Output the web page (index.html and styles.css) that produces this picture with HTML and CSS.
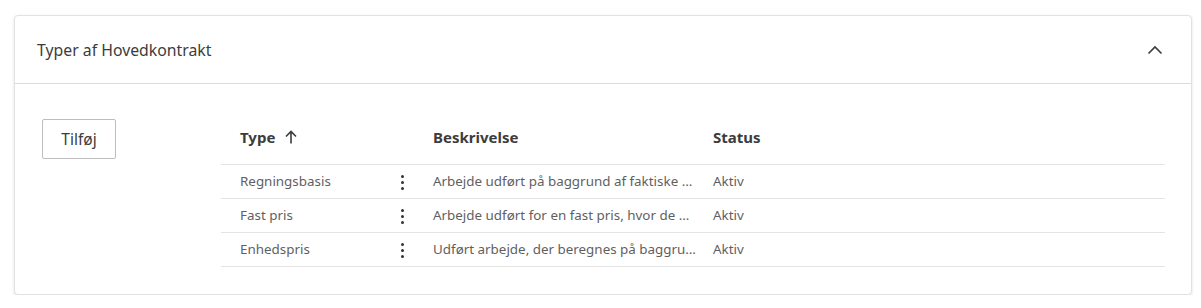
FILE: index.html
```html
<!DOCTYPE html>
<html lang="da">
<head>
  <meta charset="UTF-8">
  <meta name="viewport" content="width=device-width, initial-scale=1.0">
  <title>Typer af Hovedkontrakt</title>
  <link rel="stylesheet" href="styles.css">
</head>
<body>
  <div class="panel">
    <!-- Panel header -->
    <div class="panel-header">
      <span class="panel-title">Typer af Hovedkontrakt</span>
      <svg class="chevron" width="16" height="10" viewBox="0 0 16 10">
        <path d="M1.5 8.5 L8 2 L14.5 8.5" fill="none" stroke="#3c3c3c" stroke-width="1.6"/>
      </svg>
    </div>

    <!-- Panel body -->
    <div class="panel-body">
      <button class="btn">Tilføj</button>

      <table class="table">
        <thead>
          <tr>
            <th class="col-type">
              <span class="sort">Type
                <svg width="12" height="14" viewBox="0 0 12 14">
                  <path d="M6 13.5 V1.5 M1 6.5 L6 1.5 L11 6.5" fill="none" stroke="#3c3c3c" stroke-width="1.6"/>
                </svg>
              </span>
            </th>
            <th class="col-menu"></th>
            <th class="col-desc">Beskrivelse</th>
            <th>Status</th>
          </tr>
        </thead>
        <tbody>
          <tr>
            <td class="col-type">Regningsbasis</td>
            <td class="col-menu"><span class="kebab"><i></i><i></i><i></i></span></td>
            <td class="col-desc">Arbejde udført på baggrund af faktiske …</td>
            <td>Aktiv</td>
          </tr>
          <tr>
            <td class="col-type">Fast pris</td>
            <td class="col-menu"><span class="kebab"><i></i><i></i><i></i></span></td>
            <td class="col-desc">Arbejde udført for en fast pris, hvor de …</td>
            <td>Aktiv</td>
          </tr>
          <tr>
            <td class="col-type">Enhedspris</td>
            <td class="col-menu"><span class="kebab"><i></i><i></i><i></i></span></td>
            <td class="col-desc">Udført arbejde, der beregnes på baggru…</td>
            <td>Aktiv</td>
          </tr>
        </tbody>
      </table>
    </div>
  </div>
</body>
</html>
```

FILE: styles.css
```css
body {
  background-color: #ffffff;
  font-family: 'Noto Sans', sans-serif;
  color: #3c3c3c;
  margin: 0;
  padding: 0;
}

.panel {
  margin: 15px 9px 0 14px;
  border: 1px solid #e2e2e2;
  border-radius: 4px;
  box-shadow: 0 1px 3px rgba(0, 0, 0, 0.12);
  background-color: #ffffff;
}

.panel-header {
  display: flex;
  align-items: center;
  justify-content: space-between;
  height: 67px;
  padding: 0 28px 0 22px;
  border-bottom: 1px solid #dcdcdc;
}

.panel-title {
  font-size: 15.8px;
  color: #3c3c3c;
}

.chevron {
  display: block;
}

.panel-body {
  display: flex;
  align-items: flex-start;
  padding: 35px 26px 27px 27px;
}

.btn {
  width: 74px;
  height: 40px;
  margin-right: 105px;
  border: 1px solid #bdbdbd;
  border-radius: 2px;
  background-color: #ffffff;
  font-family: 'Noto Sans', sans-serif;
  font-size: 15.5px;
  color: #3c3c3c;
  cursor: pointer;
}

.table {
  flex: 1;
  table-layout: fixed;
  border-collapse: collapse;
  font-size: 13.4px;
}

.table th {
  text-align: left;
  font-weight: 700;
  font-size: 15px;
  color: #3c3c3c;
  line-height: 20px;
  padding: 8px 8px 17px;
  border-bottom: 1px solid #e4e4e4;
}

.table td {
  height: 32px;
  padding: 0 8px 1px;
  color: #5f5f5f;
  border-bottom: 1px solid #e4e4e4;
  white-space: nowrap;
  overflow: hidden;
}

.table .col-type {
  width: 132px;
  padding-left: 19px;
}

.table .col-menu {
  width: 45px;
  padding: 0;
  text-align: center;
}

.table .col-desc {
  width: 264px;
}

.sort {
  display: inline-flex;
  align-items: center;
  gap: 10px;
}

.sort svg {
  display: block;
}

.kebab {
  display: inline-flex;
  flex-direction: column;
  gap: 3px;
  vertical-align: middle;
}

.kebab i {
  display: block;
  width: 3px;
  height: 3px;
  border-radius: 50%;
  background-color: #333333;
}
```
